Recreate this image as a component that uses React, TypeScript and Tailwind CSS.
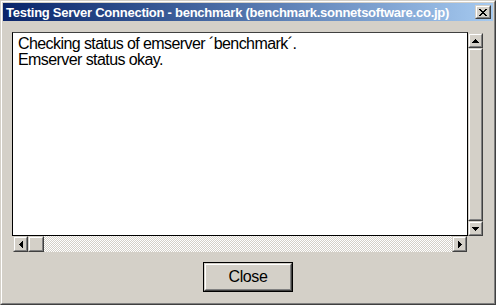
import React from "react";

// Classic Win2k style raised bevel
function Raised({ className = "", children }: { className?: string; children?: React.ReactNode }) {
  return (
    <div
      className={`border border-t-[#d4d0c8] border-l-[#d4d0c8] border-r-[#404040] border-b-[#404040] ${className}`}
    >
      <div className="flex h-full w-full items-center justify-center border border-t-white border-l-white border-r-[#808080] border-b-[#808080] bg-[#d4d0c8]">
        {children}
      </div>
    </div>
  );
}

function Arrow({ dir }: { dir: "up" | "down" | "left" | "right" }) {
  const pts = {
    up: "3.5,0 7,4 0,4",
    down: "0,0 7,0 3.5,4",
    left: "4,0 4,7 0,3.5",
    right: "0,0 4,3.5 0,7",
  }[dir];
  const vertical = dir === "up" || dir === "down";
  return (
    <svg
      width={vertical ? 7 : 4}
      height={vertical ? 4 : 7}
      viewBox={vertical ? "0 0 7 4" : "0 0 4 7"}
      shapeRendering="crispEdges"
    >
      <polygon points={pts} fill="#000" />
    </svg>
  );
}

const dither =
  "bg-[repeating-conic-gradient(#ffffff_0_25%,#d4d0c8_0_50%)] bg-[length:2px_2px]";

export default function App() {
  return (
    <div className="h-[305px] w-[496px] border border-t-[#d4d0c8] border-l-[#d4d0c8] border-r-[#404040] border-b-[#404040] bg-[#d4d0c8]">
      <div className="flex h-full w-full flex-col border border-t-white border-l-white border-r-[#808080] border-b-[#808080] p-px">
        {/* Title bar */}
        <div className="flex h-[18px] shrink-0 items-center justify-between bg-gradient-to-r from-[#0a246a] to-[#a6caf0] pl-[3px] pr-[2px]">
          <span className="font-['Liberation_Sans',Arial,sans-serif] text-[13px] font-bold leading-none tracking-[-0.25px] whitespace-nowrap text-white">
            Testing Server Connection - benchmark (benchmark.sonnetsoftware.co.jp)
          </span>
          <Raised className="h-[14px] w-[16px]">
            <svg width="8" height="7" viewBox="0 0 8 7" shapeRendering="crispEdges">
              <path d="M0 0h2v1H0zM6 0h2v1H6zM1 1h2v1H1zM5 1h2v1H5zM2 2h4v1H2zM3 3h2v1H3zM2 4h4v1H2zM1 5h2v1H1zM5 5h2v1H5zM0 6h2v1H0zM6 6h2v1H6z" fill="#000" />
            </svg>
          </Raised>
        </div>

        {/* Log area with scrollbars */}
        <div className="mt-[11px] ml-[9px] grid grid-cols-[456px_15px] grid-rows-[204px_16px]">
          <div className="border border-black border-t-[#404040] bg-white px-[5px] pt-[3px] font-['Liberation_Sans',Arial,sans-serif] text-[16px] leading-[16px] tracking-[-0.58px] text-black">
            <div>Checking status of emserver ´benchmark´.</div>
            <div>Emserver status okay.</div>
          </div>

          {/* vertical scrollbar */}
          <div className="flex flex-col pt-px">
            <Raised className="h-[15px] w-[15px]">
              <Arrow dir="up" />
            </Raised>
            <Raised className="w-[15px] flex-1" />
            <Raised className="h-[15px] w-[15px]">
              <Arrow dir="down" />
            </Raised>
          </div>

          {/* horizontal scrollbar */}
          <div className={`ml-px mr-px flex ${dither}`}>
            <Raised className="h-[16px] w-[15px]">
              <Arrow dir="left" />
            </Raised>
            <Raised className="h-[16px] w-[16px]" />
            <div className="flex-1" />
            <Raised className="h-[16px] w-[15px]">
              <Arrow dir="right" />
            </Raised>
          </div>
          <div />
        </div>

        {/* Close button */}
        <div className="mt-[10px] flex justify-center">
          <div className="h-[30px] w-[90px] border border-black">
            <Raised className="h-full w-full">
              <span className="font-['Liberation_Sans',Arial,sans-serif] text-[16px] leading-none tracking-[-0.4px] text-black">
                Close
              </span>
            </Raised>
          </div>
        </div>
      </div>
    </div>
  );
}
